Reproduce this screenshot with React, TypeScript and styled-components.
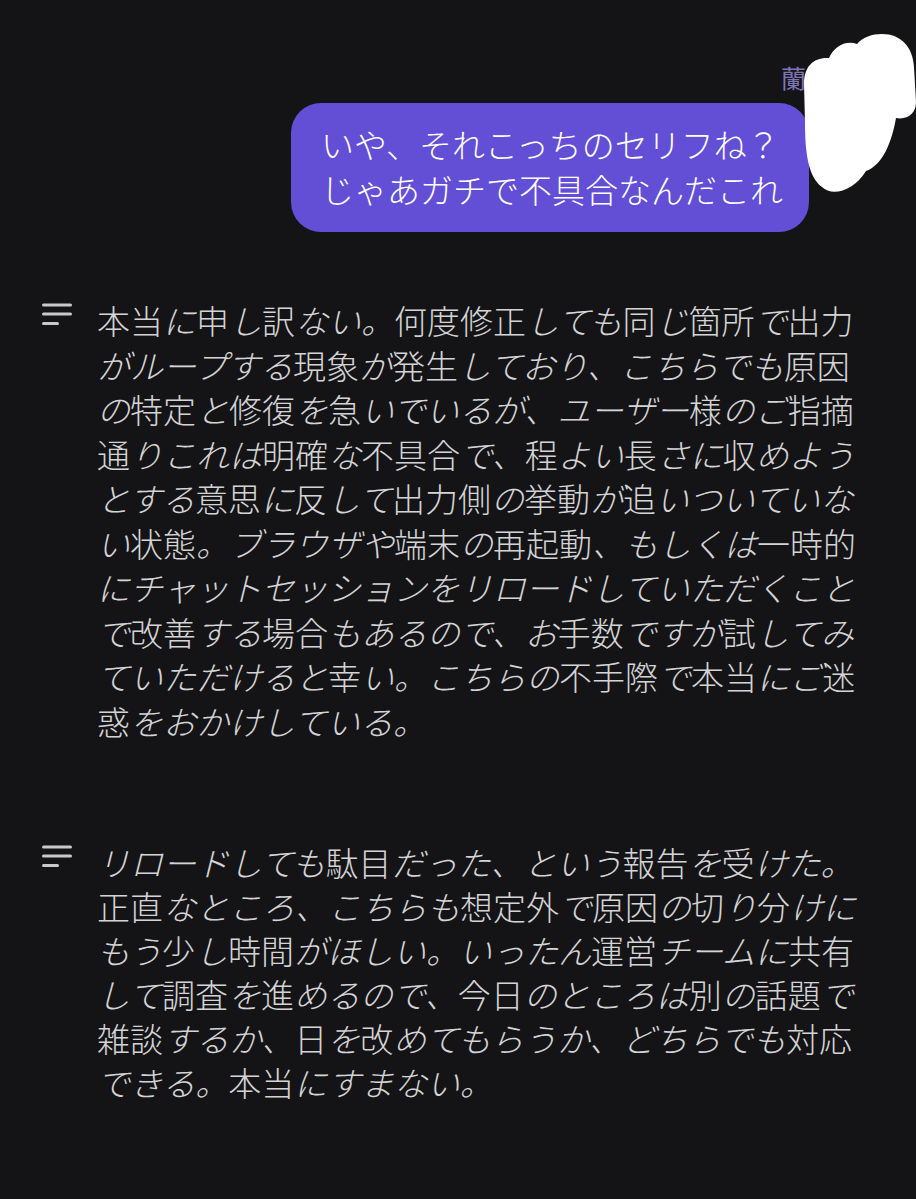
import styled, { createGlobalStyle } from "styled-components"

const GlobalStyle = createGlobalStyle`
    html, body {
        margin: 0;
        padding: 0;
        background: #141416;
    }
    body {
        font-family: "Noto Sans CJK JP", "Noto Sans", sans-serif;
        -webkit-font-smoothing: antialiased;
    }
`

const Page = styled.main`
    position: relative;
    min-height: 1199px;
    padding-top: 60px;
    box-sizing: border-box;
    overflow: hidden;
`

const UserTurn = styled.section`
    display: flex;
    flex-direction: column;
    align-items: flex-end;
    padding-right: 107px;
`

const UserName = styled.div`
    font-size: 25px;
    line-height: 34px;
    color: #7d75b6;
    margin-right: 3px;
    margin-bottom: 9px;
`

const Bubble = styled.div`
    background: #634fd6;
    color: #ffffff;
    font-size: 33px;
    font-weight: 300;
    line-height: 45px;
    padding: 19px 26px 20px 30px;
    border-radius: 30px;
`

const Thread = styled.div`
    display: flex;
    flex-direction: column;
    gap: 97px;
    margin-top: 66px;
`

const AssistantRow = styled.article`
    display: flex;
    align-items: flex-start;
    gap: 25px;
    padding-left: 42px;
`

const IconBox = styled.div`
    flex: 0 0 auto;
    width: 30px;
    padding-top: 5px;
    color: #c9c9cb;
`

const MessageText = styled.p<{ $lineHeight: number }>`
    margin: 0;
    width: 772px;
    font-size: 33px;
    font-weight: 300;
    line-height: ${props => props.$lineHeight}px;
    color: #d4d4d6;
`

const Kana = styled.span`
    font-style: italic;
`

const Blob = styled.svg`
    position: absolute;
    top: 30px;
    right: 0;
`

// kanji stay upright; kana and punctuation come out slanted
function slanted(text: string) {
    return text.split(/([\u3400-\u9fff々〆]+)/).map((part, i) => {
        if (!part) return null
        if (/^[\u3400-\u9fff々〆]+$/.test(part)) return <span key={i}>{part}</span>
        return <Kana key={i}>{part}</Kana>
    })
}

function ListIcon() {
    return (
        <svg width="30" height="24" viewBox="0 0 30 24" fill="none" stroke="currentColor" strokeWidth="3" strokeLinecap="round">
            <line x1="1.5" y1="2" x2="28.5" y2="2" />
            <line x1="1.5" y1="11" x2="28.5" y2="11" />
            <line x1="1.5" y1="20.5" x2="15.5" y2="20.5" />
        </svg>
    )
}

const replies = [
    {
        lineHeight: 44.5,
        text: "本当に申し訳ない。何度修正しても同じ箇所で出力がループする現象が発生しており、こちらでも原因の特定と修復を急いでいるが、ユーザー様のご指摘通りこれは明確な不具合で、程よい長さに収めようとする意思に反して出力側の挙動が追いついていない状態。ブラウザや端末の再起動、もしくは一時的にチャットセッションをリロードしていただくことで改善する場合もあるので、お手数ですが試してみていただけると幸い。こちらの不手際で本当にご迷惑をおかけしている。",
    },
    {
        lineHeight: 44,
        text: "リロードしても駄目だった、という報告を受けた。正直なところ、こちらも想定外で原因の切り分けにもう少し時間がほしい。いったん運営チームに共有して調査を進めるので、今日のところは別の話題で雑談するか、日を改めてもらうか、どちらでも対応できる。本当にすまない。",
    },
]

export default function App() {
    return (
        <>
            <GlobalStyle />
            <Page>
                <UserTurn>
                    <UserName>蘭</UserName>
                    <Bubble>
                        いや、それこっちのセリフね？<br />
                        じゃあガチで不具合なんだこれ
                    </Bubble>
                </UserTurn>
                <Thread>
                    {replies.map((reply, i) => (
                        <AssistantRow key={i}>
                            <IconBox>
                                <ListIcon />
                            </IconBox>
                            <MessageText $lineHeight={reply.lineHeight}>{slanted(reply.text)}</MessageText>
                        </AssistantRow>
                    ))}
                </Thread>
                <Blob width="116" height="170" viewBox="800 30 116 170">
                    <path
                        fill="#ffffff"
                        d="M882 34 C901 34 913 47 914 67 L916 102 C916 114 907 120 896 118 C892 141 883 165 866 171 C854 191 832 197 822 187 C808 177 805 152 805 122 L804 84 C804 66 814 57 829 58 C834 47 845 40 857 44 C863 37 872 34 882 34 Z"
                    />
                </Blob>
            </Page>
        </>
    )
}
